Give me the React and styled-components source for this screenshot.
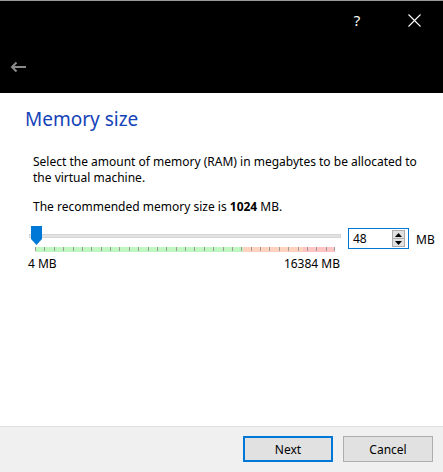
import React from "react";
import styled, { createGlobalStyle } from "styled-components";

const Global = createGlobalStyle`
  html, body { margin: 0; padding: 0; background: #fff; }
  body { font-family: "Noto Sans", "Open Sans", sans-serif; }
  * { box-sizing: border-box; }
`;

const Window = styled.div`
  width: 443px;
  height: 472px;
  display: flex;
  flex-direction: column;
  background: #fff;
  border-top: 1px solid #9a9a9a;
`;

const Header = styled.div`
  height: 92px;
  background: #000;
  display: flex;
  flex-direction: column;
`;

const Controls = styled.div`
  display: flex;
  justify-content: flex-end;
  gap: 11px;
  padding-right: 6px;
  height: 40px;
`;

const CtrlButton = styled.div`
  width: 46px;
  height: 38px;
  display: flex;
  align-items: center;
  justify-content: center;
  color: #fff;
  font-size: 15px;
  font-family: "Noto Sans", sans-serif;
`;

const BackRow = styled.div`
  display: flex;
  align-items: center;
  padding-left: 10px;
  height: 52px;
`;

const Content = styled.div`
  flex: 1;
  display: flex;
  flex-direction: column;
  padding: 0 0 0 25px;
`;

const Title = styled.h1`
  margin: 12px 0 0 0;
  font-family: "Noto Sans", sans-serif;
  font-weight: 400;
  font-size: 19px;
  line-height: 28px;
  color: #1443b8;
`;

const Text = styled.p`
  margin: ${p => p.$mt || 0}px 0 0 8px;
  font-size: 12px;
  line-height: 16px;
  color: #000;
  width: 392px;
`;

const SliderRow = styled.div`
  display: flex;
  align-items: flex-start;
  margin-top: 9px;
  margin-left: 4px;
`;

const SliderArea = styled.div`
  position: relative;
  width: 312px;
  height: 30px;
`;

const Track = styled.div`
  margin-top: 10px;
  height: 4px;
  background: #e3e3e3;
  border: 1px solid #d6d6d6;
`;

const Ticks = styled.div`
  margin: 9px 0 0 6px;
  width: 300px;
  height: 5px;
  display: flex;
  position: relative;
`;

const Zone = styled.div`
  height: 100%;
  width: ${p => p.$w}px;
  background: ${p => p.$c};
`;

const Tick = styled.div`
  position: absolute;
  top: 0;
  width: 1px;
  height: 4px;
  background: #9a9a9a;
`;

const Handle = styled.svg`
  position: absolute;
  left: 2px;
  top: 2px;
`;

const Spin = styled.div`
  margin-left: 7px;
  margin-top: 4px;
  width: 61px;
  height: 21px;
  border: 1px solid #0078d7;
  display: flex;
  align-items: center;
  padding: 1px;
`;

const SpinValue = styled.div`
  flex: 1;
  font-size: 12px;
  padding-left: 3px;
`;

const SpinButtons = styled.div`
  width: 13px;
  height: 17px;
  display: flex;
  flex-direction: column;
  margin-right: 2px;
`;

const SpinBtn = styled.div`
  flex: 1;
  background: #e1e1e1;
  border: 1px solid #adadad;
  display: flex;
  align-items: center;
  justify-content: center;
  & + & { border-top: none; }
`;

const Unit = styled.div`
  margin-left: 7px;
  margin-top: 7px;
  font-size: 12px;
`;

const Scale = styled.div`
  width: 312px;
  margin-left: 3px;
  display: flex;
  justify-content: space-between;
  font-size: 12px;
  margin-top: 1px;
`;

const Footer = styled.div`
  height: 46px;
  background: #f0f0f0;
  border-top: 1px solid #dfdfdf;
  display: flex;
  justify-content: flex-end;
  align-items: flex-start;
  gap: 10px;
  padding: 9px 10px 0 0;
`;

const Button = styled.button`
  width: 90px;
  height: 26px;
  background: #e1e1e1;
  border: ${p => (p.$primary ? "2px solid #0078d7" : "1px solid #adadad")};
  font-family: "Noto Sans", sans-serif;
  font-size: 12px;
  color: #000;
  padding: 0;
`;

const ticks = Array.from({ length: 33 }, (_, i) => Math.round(i * 9.375));

export default function App() {
  return (
    <>
      <Global />
      <Window>
        <Header>
          <Controls>
            <CtrlButton>?</CtrlButton>
            <CtrlButton>
              <svg width="13" height="13" viewBox="0 0 13 13">
                <path d="M0.5 0.5 L12.5 12.5 M12.5 0.5 L0.5 12.5" stroke="#fff" strokeWidth="1.1" />
              </svg>
            </CtrlButton>
          </Controls>
          <BackRow>
            <svg width="17" height="12" viewBox="0 0 17 12">
              <path d="M16 6 H2 M6.5 1.5 L2 6 L6.5 10.5" stroke="#8a8a8a" strokeWidth="2" fill="none" />
            </svg>
          </BackRow>
        </Header>
        <Content>
          <Title>Memory size</Title>
          <Text $mt={21}>
            Select the amount of memory (RAM) in megabytes to be allocated to the virtual machine.
          </Text>
          <Text $mt={13}>
            The recommended memory size is <b>1024</b> MB.
          </Text>
          <SliderRow>
            <SliderArea>
              <Track />
              <Ticks>
                <Zone $w={208} $c="#c0f7c0" />
                <Zone $w={60} $c="#ffd3bd" />
                <Zone $w={32} $c="#ffc4c4" />
                {ticks.map(x => (
                  <Tick key={x} style={{ left: Math.min(x, 299) }} />
                ))}
              </Ticks>
              <Handle width="11" height="19" viewBox="0 0 11 19">
                <path d="M0 0 H11 V13 L5.5 19 L0 13 Z" fill="#0078d7" />
              </Handle>
            </SliderArea>
            <Spin>
              <SpinValue>48</SpinValue>
              <SpinButtons>
                <SpinBtn>
                  <svg width="7" height="4" viewBox="0 0 7 4"><path d="M0 4 L3.5 0 L7 4 Z" fill="#000" /></svg>
                </SpinBtn>
                <SpinBtn>
                  <svg width="7" height="4" viewBox="0 0 7 4"><path d="M0 0 L3.5 4 L7 0 Z" fill="#000" /></svg>
                </SpinBtn>
              </SpinButtons>
            </Spin>
            <Unit>MB</Unit>
          </SliderRow>
          <Scale>
            <span>4 MB</span>
            <span>16384 MB</span>
          </Scale>
        </Content>
        <Footer>
          <Button $primary>Next</Button>
          <Button>Cancel</Button>
        </Footer>
      </Window>
    </>
  );
}
